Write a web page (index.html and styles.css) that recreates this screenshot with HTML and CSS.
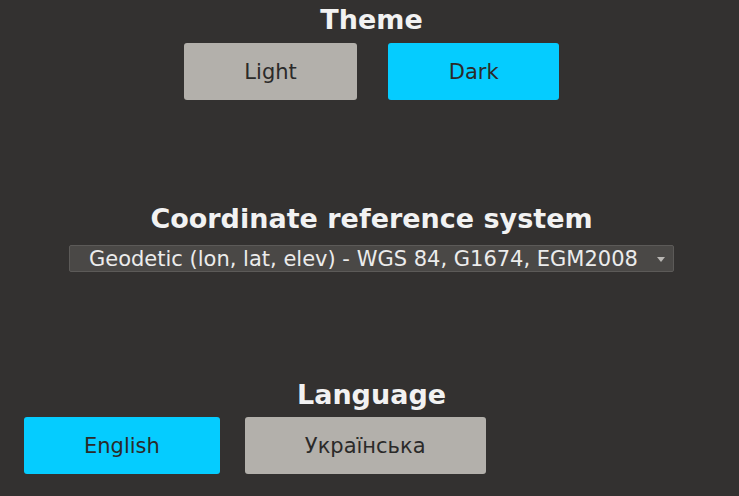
FILE: index.html
```html
<!DOCTYPE html>
<html>
<head>
<meta charset="utf-8">
<link rel="stylesheet" href="styles.css">
</head>
<body>
<div class="page">
  <section class="group group-theme">
    <h2 class="heading">Theme</h2>
    <div class="row row-center">
      <button class="btn btn-grey">Light</button>
      <button class="btn btn-cyan">Dark</button>
    </div>
  </section>
  <section class="group group-crs">
    <h2 class="heading">Coordinate reference system</h2>
    <div class="combo">
      <span class="combo-text">Geodetic (lon, lat, elev) - WGS 84, G1674, EGM2008</span>
      <svg class="combo-arrow" width="8" height="5" viewBox="0 0 8 5"><path d="M0 0H8L4 5Z" fill="#b9b7b4"/></svg>
    </div>
  </section>
  <section class="group group-lang">
    <h2 class="heading">Language</h2>
    <div class="row row-left">
      <button class="btn btn-cyan">English</button>
      <button class="btn btn-grey">Українська</button>
    </div>
  </section>
</div>
</body>
</html>
```
FILE: styles.css
```css
html, body {
  margin: 0;
  padding: 0;
  background: #333130;
  width: 739px;
  height: 496px;
  overflow: hidden;
}
.page {
  font-family: "DejaVu Sans", sans-serif;
  display: flex;
  flex-direction: column;
  padding-left: 4px;
}
.group {
  display: flex;
  flex-direction: column;
  align-items: center;
}
.group-theme { padding-top: 4px; }
.group-crs { margin-top: 103px; }
.group-lang { margin-top: 107px; }
.heading {
  margin: 0;
  font-size: 27px;
  font-weight: bold;
  line-height: 31px;
  color: #f2f2f2;
}
.row {
  display: flex;
  margin-top: 8px;
}
.row-center { gap: 31px; justify-content: center; }
.row-left { gap: 25px; align-self: flex-start; margin-left: 20px; margin-top: 7px; }
.btn {
  font-family: "DejaVu Sans", sans-serif;
  font-size: 21px;
  height: 57px;
  padding: 0 60px;
  border: none;
  border-radius: 3px;
  color: #2b2a29;
  cursor: pointer;
}
.row-center .btn { padding: 0 60.5px; }
.btn-grey { background: #b3b0ab; }
.btn-cyan { background: #05ccff; }
.combo {
  margin-top: 11px;
  width: 603px;
  height: 25px;
  box-sizing: content-box;
  border: 1px solid #5c5a58;
  border-radius: 2px;
  background: #4a4846;
  display: flex;
  align-items: center;
  padding: 0;
  position: relative;
}
.combo-text {
  color: #ececec;
  font-size: 21px;
  padding-left: 19px;
  white-space: nowrap;
}
.combo-arrow {
  position: absolute;
  right: 8px;
  top: 11px;
}
```
